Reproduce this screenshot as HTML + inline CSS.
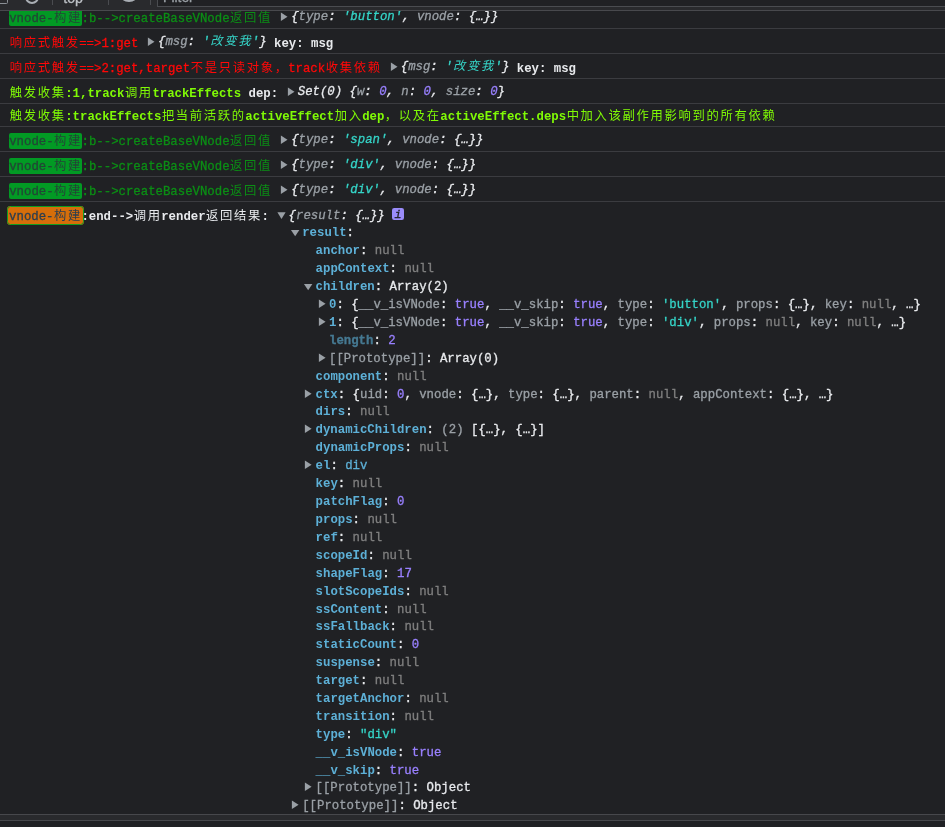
<!DOCTYPE html>
<html lang="zh-CN"><head><meta charset="utf-8"><title>Console</title>
<style>
*{box-sizing:border-box;margin:0;padding:0}
html,body{width:945px;height:827px;overflow:hidden;background:#202124}
body{font-family:"Liberation Mono","Noto Sans CJK SC",monospace;font-size:12.333px;color:#e8eaed;-webkit-font-smoothing:antialiased;-webkit-text-stroke:0.3px}
#app{position:relative;width:945px;height:827px;overflow:hidden;will-change:transform}
.c{font-family:"Noto Sans CJK SC","WenQuanYi Zen Hei",sans-serif;font-size:12.3px;line-height:0;font-weight:400;letter-spacing:1.7px;vertical-align:-0.2px;margin-left:.5px;margin-right:-.5px;-webkit-text-stroke:0}
.ln{position:absolute;white-space:pre;line-height:18.0px;height:18.0px}
.hr{position:absolute;left:0;width:945px;height:1px;background:#3b3c40}
.st{position:relative;top:1.7px}
.bg1{background:#029a24;color:#234636;border-radius:2px;padding:1.8px 0 0.3px}
.bg2{background:#d66e0a;color:#2c3e50;border-radius:3.4px;padding:2.5px 1.1px 0;border:1.1px solid #0f9d20;margin:0 -2.2px}
.g{color:#0b8e15}
.r{color:#ff0808}
.lm{color:#80fb05;font-weight:bold;-webkit-text-stroke:0}
.w{color:#e8eaed;font-weight:bold;-webkit-text-stroke:0}
.it{font-style:italic}
.k{color:#9aa0a6}
.s{color:#35d4c7}
.n{color:#9980ff}
.nu{color:#7f7f7f}
.nm{color:#5db0d7;font-weight:bold;-webkit-text-stroke:0}
.dim{color:#5db0d7;opacity:.62;font-weight:bold}
.pr{color:#9aa0a6}
.ar{display:inline-block;width:11.2px;height:10px;position:relative;vertical-align:baseline}
.ar svg{position:absolute;left:0;top:0;overflow:visible}
.info{display:inline-block;position:relative;width:11.8px;height:12.8px;border-radius:2.2px;background:#9a8cfa;vertical-align:baseline;top:1.6px;margin-left:7.4px}
.info i{position:absolute;left:0;right:0;top:-1.6px;text-align:center;font-family:"Liberation Mono",monospace;font-style:italic;font-weight:normal;font-size:11.5px;color:#202124;line-height:18px}
.tb{position:absolute;left:0;top:0;width:945px;height:10px;background:#292a2d;z-index:5;overflow:hidden}
.tb div{position:absolute}
</style></head>
<body><div id="app">
<div class="tb">
<div style="left:-6px;top:-10.4px;width:13.9px;height:13.9px;border:1.1px solid #8a8f95;border-radius:1.5px"></div>
<div style="left:25.2px;top:-10.4px;width:14.2px;height:14.2px;border:2.2px solid #a9aeb4;border-radius:50%"></div>
<div style="left:52px;top:-14px;width:1px;height:18.8px;background:#4a4c50"></div>
<div style="left:63.2px;top:-11.4px;font-family:'Liberation Sans',sans-serif;font-size:14.2px;line-height:18px;color:#bdc1c6">top</div>
<div style="left:108.1px;top:-14px;width:1px;height:18.8px;background:#4a4c50"></div>
<div style="left:117.7px;top:-20.5px;width:22.8px;height:22.8px;border:2.4px solid #a9aeb4;border-radius:50%;clip-path:inset(0 5px 0 5px)"></div>
<div style="left:150px;top:-14px;width:1px;height:18.8px;background:#4a4c50"></div>
<div style="left:156.6px;top:-14px;width:800px;height:20.6px;background:#202124;border:1px solid #4a4c50"></div>
<div style="left:163px;top:-11.1px;font-family:'Liberation Sans',sans-serif;font-size:13.8px;line-height:18px;color:#9aa0a6">Filter</div>
</div>
<div style="position:absolute;left:0;top:10px;width:945px;height:1px;background:#48494d;z-index:6"></div>
<div class="hr" style="top:28.1px"></div>
<div class="hr" style="top:53.0px"></div>
<div class="hr" style="top:78.0px"></div>
<div class="hr" style="top:103.1px"></div>
<div class="hr" style="top:126.4px"></div>
<div class="hr" style="top:151.4px"></div>
<div class="hr" style="top:176.3px"></div>
<div class="hr" style="top:201.3px"></div>
<div class="ln" style="left:9.20px;top:8px"><span class="st"><span class="bg1" style="border-radius:0 0 2px 2px">vnode-<span class="c">构建</span></span><span class="g">:b--&gt;createBaseVNode<span class="c">返回值</span></span></span> <span class="ar" style="width:12.2px"><svg width="12" height="10"><path d="M1.90 2.50 L8.50 6.80 L1.90 11.10 Z" fill="#9aa0a6"/></svg></span><span class="it">{<span class="k">type</span>: <span class="s">'button'</span>, <span class="k">vnode</span>: {…}}</span></div>
<div class="ln" style="left:9.20px;top:33px"><span class="st r"><span class="c">响应式触发</span>==&gt;1:get</span> <span class="ar" style="width:12.2px"><svg width="12" height="10"><path d="M1.90 2.50 L8.50 6.80 L1.90 11.10 Z" fill="#9aa0a6"/></svg></span><span class="it">{<span class="k">msg</span>: <span class="s">'<span class="c">改变我</span>'</span>}</span><span class="st w"> key: msg</span></div>
<div class="ln" style="left:9.20px;top:58px"><span class="st r"><span class="c">响应式触发</span>==&gt;2:get,target<span class="c">不是只读对象，</span>track<span class="c">收集依赖</span></span> <span class="ar" style="width:12.2px"><svg width="12" height="10"><path d="M1.90 2.50 L8.50 6.80 L1.90 11.10 Z" fill="#9aa0a6"/></svg></span><span class="it">{<span class="k">msg</span>: <span class="s">'<span class="c">改变我</span>'</span>}</span><span class="st w"> key: msg</span></div>
<div class="ln" style="left:9.20px;top:83px"><span class="st"><span class="lm"><span class="c">触发收集</span>:1,track<span class="c">调用</span>trackEffects</span><span class="w"> dep:</span></span> <span class="ar" style="width:12.2px"><svg width="12" height="10"><path d="M1.90 2.50 L8.50 6.80 L1.90 11.10 Z" fill="#9aa0a6"/></svg></span><span class="it">Set(0) {<span class="k">w</span>: <span class="n">0</span>, <span class="k">n</span>: <span class="n">0</span>, <span class="k">size</span>: <span class="n">0</span>}</span></div>
<div class="ln" style="left:9.20px;top:106px"><span class="st lm"><span class="c">触发收集</span>:trackEffects<span class="c">把当前活跃的</span>activeEffect<span class="c">加入</span>dep<span class="c">，以及在</span>activeEffect.deps<span class="c">中加入该副作用影响到的所有依赖</span></span></div>
<div class="ln" style="left:9.20px;top:131px"><span class="st"><span class="bg1">vnode-<span class="c">构建</span></span><span class="g">:b--&gt;createBaseVNode<span class="c">返回值</span></span></span> <span class="ar" style="width:12.2px"><svg width="12" height="10"><path d="M1.90 2.50 L8.50 6.80 L1.90 11.10 Z" fill="#9aa0a6"/></svg></span><span class="it">{<span class="k">type</span>: <span class="s">'span'</span>, <span class="k">vnode</span>: {…}}</span></div>
<div class="ln" style="left:9.20px;top:156px"><span class="st"><span class="bg1">vnode-<span class="c">构建</span></span><span class="g">:b--&gt;createBaseVNode<span class="c">返回值</span></span></span> <span class="ar" style="width:12.2px"><svg width="12" height="10"><path d="M1.90 2.50 L8.50 6.80 L1.90 11.10 Z" fill="#9aa0a6"/></svg></span><span class="it">{<span class="k">type</span>: <span class="s">'div'</span>, <span class="k">vnode</span>: {…}}</span></div>
<div class="ln" style="left:9.20px;top:181px"><span class="st"><span class="bg1">vnode-<span class="c">构建</span></span><span class="g">:b--&gt;createBaseVNode<span class="c">返回值</span></span></span> <span class="ar" style="width:12.2px"><svg width="12" height="10"><path d="M1.90 2.50 L8.50 6.80 L1.90 11.10 Z" fill="#9aa0a6"/></svg></span><span class="it">{<span class="k">type</span>: <span class="s">'div'</span>, <span class="k">vnode</span>: {…}}</span></div>
<div class="ln" style="left:9.20px;top:206px"><span class="st" style="top:1.2px"><span class="bg2">vnode-<span class="c">构建</span></span><span class="w">:end--&gt;<span class="c">调用</span>render<span class="c">返回结果</span>:</span></span> <span class="ar" style="width:12.2px"><svg width="12" height="10"><path d="M1.40 3.30 L9.60 3.30 L5.50 9.90 Z" fill="#9aa0a6"/></svg></span><span class="it">{<span class="k">result</span>: {…}}</span><span class="info"><i>i</i></span></div>
<div class="ln" style="left:291.00px;top:224px"><span class="ar" style="width:11.2px"><svg width="12" height="10"><path d="M-0.05 3.95 L8.35 3.95 L4.15 10.25 Z" fill="#9aa0a6"/></svg></span><span class="nm">result</span>:</div>
<div class="ln" style="left:315.60px;top:242px"><span class="nm">anchor</span>: <span class="nu">null</span></div>
<div class="ln" style="left:315.60px;top:260px"><span class="nm">appContext</span>: <span class="nu">null</span></div>
<div class="ln" style="left:304.40px;top:278px"><span class="ar" style="width:11.2px"><svg width="12" height="10"><path d="M-0.05 3.95 L8.35 3.95 L4.15 10.25 Z" fill="#9aa0a6"/></svg></span><span class="nm">children</span>: Array(2)</div>
<div class="ln" style="left:317.80px;top:296px"><span class="ar" style="width:11.2px"><svg width="12" height="10"><path d="M0.90 1.55 L7.60 5.80 L0.90 10.05 Z" fill="#9aa0a6"/></svg></span><span class="nm">0</span>: {<span class="k">__v_isVNode</span>: <span class="n">true</span>, <span class="k">__v_skip</span>: <span class="n">true</span>, <span class="k">type</span>: <span class="s">'button'</span>, <span class="k">props</span>: {…}, <span class="k">key</span>: <span class="nu">null</span>, …}</div>
<div class="ln" style="left:317.80px;top:314px"><span class="ar" style="width:11.2px"><svg width="12" height="10"><path d="M0.90 1.55 L7.60 5.80 L0.90 10.05 Z" fill="#9aa0a6"/></svg></span><span class="nm">1</span>: {<span class="k">__v_isVNode</span>: <span class="n">true</span>, <span class="k">__v_skip</span>: <span class="n">true</span>, <span class="k">type</span>: <span class="s">'div'</span>, <span class="k">props</span>: <span class="nu">null</span>, <span class="k">key</span>: <span class="nu">null</span>, …}</div>
<div class="ln" style="left:329.00px;top:332px"><span class="dim">length</span>: <span class="n">2</span></div>
<div class="ln" style="left:317.80px;top:350px"><span class="ar" style="width:11.2px"><svg width="12" height="10"><path d="M0.90 1.55 L7.60 5.80 L0.90 10.05 Z" fill="#9aa0a6"/></svg></span><span class="pr">[[Prototype]]</span>: Array(0)</div>
<div class="ln" style="left:315.60px;top:368px"><span class="nm">component</span>: <span class="nu">null</span></div>
<div class="ln" style="left:304.40px;top:386px"><span class="ar" style="width:11.2px"><svg width="12" height="10"><path d="M0.90 1.55 L7.60 5.80 L0.90 10.05 Z" fill="#9aa0a6"/></svg></span><span class="nm">ctx</span>: {<span class="k">uid</span>: <span class="n">0</span>, <span class="k">vnode</span>: {…}, <span class="k">type</span>: {…}, <span class="k">parent</span>: <span class="nu">null</span>, <span class="k">appContext</span>: {…}, …}</div>
<div class="ln" style="left:315.60px;top:403px"><span class="nm">dirs</span>: <span class="nu">null</span></div>
<div class="ln" style="left:304.40px;top:421px"><span class="ar" style="width:11.2px"><svg width="12" height="10"><path d="M0.90 1.55 L7.60 5.80 L0.90 10.05 Z" fill="#9aa0a6"/></svg></span><span class="nm">dynamicChildren</span>: <span class="k">(2)</span> [{…}, {…}]</div>
<div class="ln" style="left:315.60px;top:439px"><span class="nm">dynamicProps</span>: <span class="nu">null</span></div>
<div class="ln" style="left:304.40px;top:457px"><span class="ar" style="width:11.2px"><svg width="12" height="10"><path d="M0.90 1.55 L7.60 5.80 L0.90 10.05 Z" fill="#9aa0a6"/></svg></span><span class="nm">el</span>: <span style="color:#5db0d7">div</span></div>
<div class="ln" style="left:315.60px;top:475px"><span class="nm">key</span>: <span class="nu">null</span></div>
<div class="ln" style="left:315.60px;top:493px"><span class="nm">patchFlag</span>: <span class="n">0</span></div>
<div class="ln" style="left:315.60px;top:511px"><span class="nm">props</span>: <span class="nu">null</span></div>
<div class="ln" style="left:315.60px;top:529px"><span class="nm">ref</span>: <span class="nu">null</span></div>
<div class="ln" style="left:315.60px;top:547px"><span class="nm">scopeId</span>: <span class="nu">null</span></div>
<div class="ln" style="left:315.60px;top:565px"><span class="nm">shapeFlag</span>: <span class="n">17</span></div>
<div class="ln" style="left:315.60px;top:583px"><span class="nm">slotScopeIds</span>: <span class="nu">null</span></div>
<div class="ln" style="left:315.60px;top:601px"><span class="nm">ssContent</span>: <span class="nu">null</span></div>
<div class="ln" style="left:315.60px;top:618px"><span class="nm">ssFallback</span>: <span class="nu">null</span></div>
<div class="ln" style="left:315.60px;top:636px"><span class="nm">staticCount</span>: <span class="n">0</span></div>
<div class="ln" style="left:315.60px;top:654px"><span class="nm">suspense</span>: <span class="nu">null</span></div>
<div class="ln" style="left:315.60px;top:672px"><span class="nm">target</span>: <span class="nu">null</span></div>
<div class="ln" style="left:315.60px;top:690px"><span class="nm">targetAnchor</span>: <span class="nu">null</span></div>
<div class="ln" style="left:315.60px;top:708px"><span class="nm">transition</span>: <span class="nu">null</span></div>
<div class="ln" style="left:315.60px;top:726px"><span class="nm">type</span>: <span class="s">"div"</span></div>
<div class="ln" style="left:315.60px;top:744px"><span class="nm">__v_isVNode</span>: <span class="n">true</span></div>
<div class="ln" style="left:315.60px;top:762px"><span class="nm">__v_skip</span>: <span class="n">true</span></div>
<div class="ln" style="left:304.40px;top:779px"><span class="ar" style="width:11.2px"><svg width="12" height="10"><path d="M0.90 1.55 L7.60 5.80 L0.90 10.05 Z" fill="#9aa0a6"/></svg></span><span class="pr">[[Prototype]]</span>: Object</div>
<div class="ln" style="left:291.00px;top:797px"><span class="ar" style="width:11.2px"><svg width="12" height="10"><path d="M0.90 1.55 L7.60 5.80 L0.90 10.05 Z" fill="#9aa0a6"/></svg></span><span class="pr">[[Prototype]]</span>: Object</div>
<div class="hr" style="top:814.0px;background:#47484c"></div>
<div style="position:absolute;left:0;top:815px;width:945px;height:5px;background:#292a2d"></div>
<div class="hr" style="top:820.0px;background:#47484c"></div>
</div></body></html>
